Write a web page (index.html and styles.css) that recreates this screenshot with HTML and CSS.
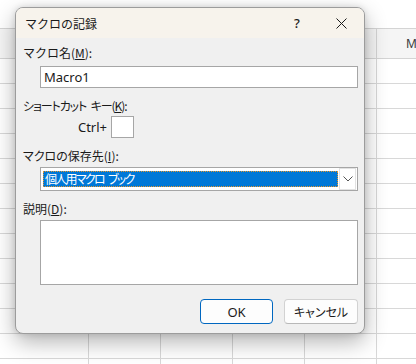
FILE: index.html
```html
<!DOCTYPE html>
<html lang="ja">
<head>
<meta charset="utf-8">
<title>マクロの記録</title>
<link rel="stylesheet" href="styles.css">
</head>
<body>
<div class="sheet">
  <div class="topbar"></div>
  <div class="colhead"><span class="colletter">M</span></div>
  <div class="grid"></div>
</div>

<div class="dialog">
  <div class="titlebar">
    <span class="title">マクロの記録</span>
    <span class="tbtn help">?</span>
    <span class="tbtn close">
      <svg width="11" height="11" viewBox="0 0 11 11"><path d="M0.5 0.5 L10.5 10.5 M10.5 0.5 L0.5 10.5" stroke="#1a1a1a" stroke-width="1" fill="none"/></svg>
    </span>
  </div>
  <div class="body">
    <div class="label l1">マクロ名(<u>M</u>):</div>
    <div class="textbox">Macro1</div>
    <div class="label l2">ショートカット キー(<u>K</u>):</div>
    <div class="ctrlrow">
      <span class="ctrltext">Ctrl+</span>
      <span class="keybox"></span>
    </div>
    <div class="label l3">マクロの保存先(<u>I</u>):</div>
    <div class="combo">
      <div class="combosel">個人用マクロ ブック</div>
      <div class="combobtn">
        <svg width="10" height="6" viewBox="0 0 10 6"><path d="M0.5 0.5 L5 5 L9.5 0.5" stroke="#555" stroke-width="1" fill="none"/></svg>
      </div>
    </div>
    <div class="label l4">説明(<u>D</u>):</div>
    <div class="textarea"></div>
    <div class="buttons">
      <div class="btn ok">OK</div>
      <div class="btn cancel">キャンセル</div>
    </div>
  </div>
</div>
</body>
</html>
```
FILE: styles.css
```css
* { box-sizing: border-box; }
html, body {
  margin: 0;
  padding: 0;
}
body {
  width: 416px;
  height: 364px;
  overflow: hidden;
  position: relative;
  background: #ffffff;
  font-family: "Noto Sans", "Noto Sans CJK JP", sans-serif;
  font-size: 12px;
  color: #1a1a1a;
}

/* spreadsheet behind */
.sheet {
  width: 416px;
  height: 364px;
  display: flex;
  flex-direction: column;
}
.topbar {
  height: 28px;
  background: #ffffff;
}
.colhead {
  height: 31px;
  border-top: 1px solid #d4d4d4;
  border-bottom: 1px solid #d4d4d4;
  background-color: #f5f5f5;
  background-image: repeating-linear-gradient(to right, transparent 0 71px, #d4d4d4 71px 72px);
  background-position: 17px 0;
  position: relative;
}
.colletter {
  position: absolute;
  left: 406px;
  top: 6px;
  font-family: "Noto Sans", sans-serif;
  font-size: 12px;
  color: #3a3a3a;
}
.grid {
  flex: 1;
  background-image:
    repeating-linear-gradient(to bottom, transparent 0 24px, #d8d8d8 24px 25px),
    repeating-linear-gradient(to right, transparent 0 71px, #d8d8d8 71px 72px);
  background-position: 0 0, 17px 0;
}

/* dialog */
.dialog {
  position: absolute;
  left: 15px;
  top: 7px;
  width: 350px;
  height: 327px;
  border: 1px solid #9c9c9c;
  border-radius: 8px;
  background: #f0f0f0;
  overflow: hidden;
  box-shadow: 0 8px 22px rgba(0,0,0,0.30), 0 0 6px rgba(0,0,0,0.12);
  display: flex;
  flex-direction: column;
}
.titlebar {
  height: 30px;
  flex: none;
  background: #f7f3ec;
  display: flex;
  align-items: center;
  padding-right: 1px;
}
.title {
  flex: 1;
  padding-left: 9px;
  font-family: "Noto Sans CJK JP", sans-serif;
  font-size: 12px;
  color: #1a1a1a;
}
.tbtn {
  width: 44px;
  height: 30px;
  display: flex;
  align-items: center;
  justify-content: center;
}
.help {
  font-family: "Noto Sans", sans-serif;
  font-size: 13px;
  font-weight: 500;
  color: #1a1a1a;
  padding-bottom: 1px;
}

.body {
  flex: 1;
  padding: 7px 5px 0 7px;
  display: flex;
  flex-direction: column;
}
.label {
  height: 16px;
  line-height: 16px;
  font-family: "Noto Sans CJK JP", sans-serif;
  font-size: 12px;
  white-space: nowrap;
}
.label u { text-underline-offset: 1px; }
.l2, .l3, .l4 { margin-top: 10px; }
.l2 {
  font-feature-settings: "palt";
  letter-spacing: -1.1px;
  word-spacing: 3px;
}
.l3 { font-feature-settings: "palt"; }

.textbox {
  margin-top: 5px;
  margin-left: 17px;
  height: 22px;
  width: 318px;
  background: #ffffff;
  border: 1px solid #a6a6a6;
  padding-left: 3px;
  line-height: 20px;
  font-family: "Noto Sans", sans-serif;
  font-size: 13px;
  color: #1a1a1a;
}

.ctrlrow {
  margin-top: 2px;
  display: flex;
  align-items: center;
  height: 22px;
}
.ctrltext {
  width: 84px;
  text-align: right;
  font-family: "Noto Sans", sans-serif;
  font-size: 13px;
  margin-right: 4px;
}
.keybox {
  width: 23px;
  height: 22px;
  background: #ffffff;
  border: 1px solid #a6a6a6;
}

.combo {
  margin-top: 3px;
  margin-left: 17px;
  width: 318px;
  height: 24px;
  border: 1px solid #a6a6a6;
  background: #ffffff;
  display: flex;
  align-items: center;
  padding: 0 1px 0 2px;
}
.combosel {
  flex: 1;
  height: 16px;
  margin-right: 1px;
  background: #0078d7;
  border: 1px dotted #e8962a;
  color: #ffffff;
  font-family: "Noto Sans CJK JP", sans-serif;
  font-feature-settings: "palt";
  letter-spacing: -1.7px;
  word-spacing: 3px;
  font-size: 12px;
  line-height: 14px;
  padding-left: 1px;
  white-space: nowrap;
}
.combobtn {
  width: 17px;
  height: 22px;
  background: #ffffff;
  border: 1px solid #e2e2e2;
  display: flex;
  align-items: center;
  justify-content: center;
}

.textarea {
  margin-top: 3px;
  margin-left: 17px;
  width: 318px;
  height: 65px;
  background: #ffffff;
  border: 1px solid #a6a6a6;
}

.buttons {
  margin-top: 14px;
  display: flex;
  justify-content: flex-end;
  gap: 11px;
  padding-right: 1px;
}
.btn {
  height: 25px;
  border-radius: 4px;
  background: #fdfdfd;
  display: flex;
  align-items: center;
  justify-content: center;
  font-size: 12px;
}
.ok {
  width: 73px;
  border: 1px solid #0067c0;
  font-family: "Noto Sans", sans-serif;
  font-size: 13px;
}
.cancel {
  width: 74px;
  border: 1px solid #d2d2d2;
  border-bottom-color: #b8b8b8;
  font-family: "Noto Sans CJK JP", sans-serif;
  font-feature-settings: "palt";
}
```
